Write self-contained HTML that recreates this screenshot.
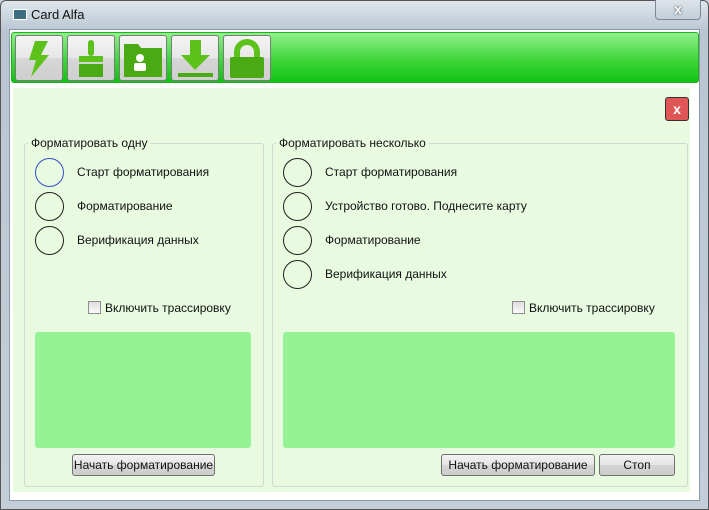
<!DOCTYPE html>
<html><head><meta charset="utf-8"><style>
*{margin:0;padding:0;box-sizing:border-box}
body{width:709px;height:510px;overflow:hidden;background:#c9d3dc;font-family:"Liberation Sans",sans-serif;font-size:12px;color:#111;position:relative}
.a{position:absolute}
.frame{left:0;top:0;width:709px;height:510px;background:linear-gradient(#dfe6ec,#b9c6d2 30px,#c4ced8);border:1px solid #555;border-radius:6px 6px 0 0}
.client{left:9px;top:29px;width:691px;height:472px;background:#fff;border:1px solid #8a99a8}
.tb{left:11px;top:32px;width:688px;height:51px;background:linear-gradient(#8ff08b,#3ed63a 55%,#12c212);border-radius:3px;border:1px solid #22b122}
.btn{top:35px;width:48px;height:46px;border:1px solid #7a7a7a;border-radius:3px;background:linear-gradient(#f4f4f4,#e7e7e7 50%,#d6d6d6 51%,#cfcfcf)}
.content{left:13px;top:88px;width:677px;height:404px;background:#e8fae0}
.gb{border:1px solid #d0d8d0;border-radius:3px}
.lg{background:#e8fae0;padding:0 3px;top:-8px;left:3px;position:absolute;font-size:12px;white-space:nowrap}
.c{width:29px;height:29px;border:1.5px solid #222;border-radius:50%}
.t{font-size:12px;white-space:nowrap}
.g{background:#95f295;border-radius:3px}
.pb{border:1px solid #707070;border-radius:3px;background:linear-gradient(#f2f2f2,#e5e5e5 50%,#d5d5d5 51%,#cdcdcd);text-align:center;line-height:20px;font-size:12px}
.cb{width:13px;height:13px;border:1px solid #8f8f8f;background:linear-gradient(#ddd,#fafafa)}
</style></head><body>
<div class="a frame"></div>
<div class="a" style="left:13px;top:9px;width:14px;height:11px;background:#3b6e80;border:1px solid #fff"></div>
<div class="a t" style="left:31px;top:7px;font-size:13px">Card Alfa</div>
<div class="a" style="left:655px;top:0;width:46px;height:20px;border:1px solid #7a8794;border-top:none;border-radius:0 0 4px 4px;background:linear-gradient(#dde4ea,#c3ced8);text-align:center;color:#fff;font-weight:bold;font-size:14px;line-height:18px;text-shadow:0 0 2px #333">x</div>
<div class="a client"></div>
<div class="a tb"></div>
<div class="a btn" style="left:15px"><svg width="46" height="44" viewBox="0 0 46 44"><path d="M19 5h13l-7 14h8L15 41l5-17h-7z" fill="#5cc21a"/></svg></div>
<div class="a btn" style="left:67px"><svg width="46" height="44"><rect x="20" y="4" width="6" height="16" rx="3" fill="#5cc21a"/><rect x="11" y="20" width="24" height="6" fill="#5cc21a"/><rect x="11" y="28" width="24" height="13" fill="#4aaa14"/></svg></div>
<div class="a btn" style="left:119px"><svg width="46" height="44"><path d="M4 8h14l3 4h21v29H4z" fill="#4aaa14"/><circle cx="20" cy="22" r="4" fill="#fff"/><rect x="14" y="27" width="12" height="8" rx="2" fill="#fff"/></svg></div>
<div class="a btn" style="left:171px"><svg width="46" height="44"><rect x="18" y="4" width="11" height="16" fill="#5cc21a"/><path d="M9 19h29L23 34z" fill="#5cc21a"/><rect x="6" y="37" width="35" height="4" fill="#4aaa14"/></svg></div>
<div class="a btn" style="left:223px"><svg width="46" height="44"><path d="M10 22v-6a13 13 0 0 1 26 0v6h-6v-6a7 7 0 0 0-14 0v6z" fill="#5cc21a"/><rect x="6" y="21" width="34" height="21" rx="2" fill="#4aaa14"/></svg></div>
<div class="a content"></div>
<div class="a" style="left:665px;top:97px;width:24px;height:24px;border:1px solid #333;border-radius:3px;background:#e05555;color:#fff;font-weight:bold;text-align:center;line-height:22px;font-size:14px">x</div>

<div class="a gb" style="left:24px;top:143px;width:240px;height:344px"><span class="lg">Форматировать одну</span></div>
<div class="a c" style="left:35px;top:158px;border-color:#3a4fc8"></div>
<div class="a c" style="left:35px;top:192px"></div>
<div class="a c" style="left:35px;top:226px"></div>
<div class="a t" style="left:77px;top:165px">Старт форматирования</div>
<div class="a t" style="left:77px;top:199px">Форматирование</div>
<div class="a t" style="left:77px;top:233px">Верификация данных</div>
<div class="a cb" style="left:88px;top:301px"></div>
<div class="a t" style="left:105px;top:301px">Включить трассировку</div>
<div class="a g" style="left:35px;top:332px;width:216px;height:116px"></div>
<div class="a pb" style="left:72px;top:454px;width:143px;height:22px">Начать форматирование</div>

<div class="a gb" style="left:272px;top:143px;width:416px;height:344px"><span class="lg">Форматировать несколько</span></div>
<div class="a c" style="left:283px;top:158px"></div>
<div class="a c" style="left:283px;top:192px"></div>
<div class="a c" style="left:283px;top:226px"></div>
<div class="a c" style="left:283px;top:260px"></div>
<div class="a t" style="left:325px;top:165px">Старт форматирования</div>
<div class="a t" style="left:325px;top:199px">Устройство готово. Поднесите карту</div>
<div class="a t" style="left:325px;top:233px">Форматирование</div>
<div class="a t" style="left:325px;top:267px">Верификация данных</div>
<div class="a cb" style="left:512px;top:301px"></div>
<div class="a t" style="left:529px;top:301px">Включить трассировку</div>
<div class="a g" style="left:283px;top:332px;width:392px;height:116px"></div>
<div class="a pb" style="left:441px;top:454px;width:154px;height:22px">Начать форматирование</div>
<div class="a pb" style="left:599px;top:454px;width:76px;height:22px">Стоп</div>
</body></html>
